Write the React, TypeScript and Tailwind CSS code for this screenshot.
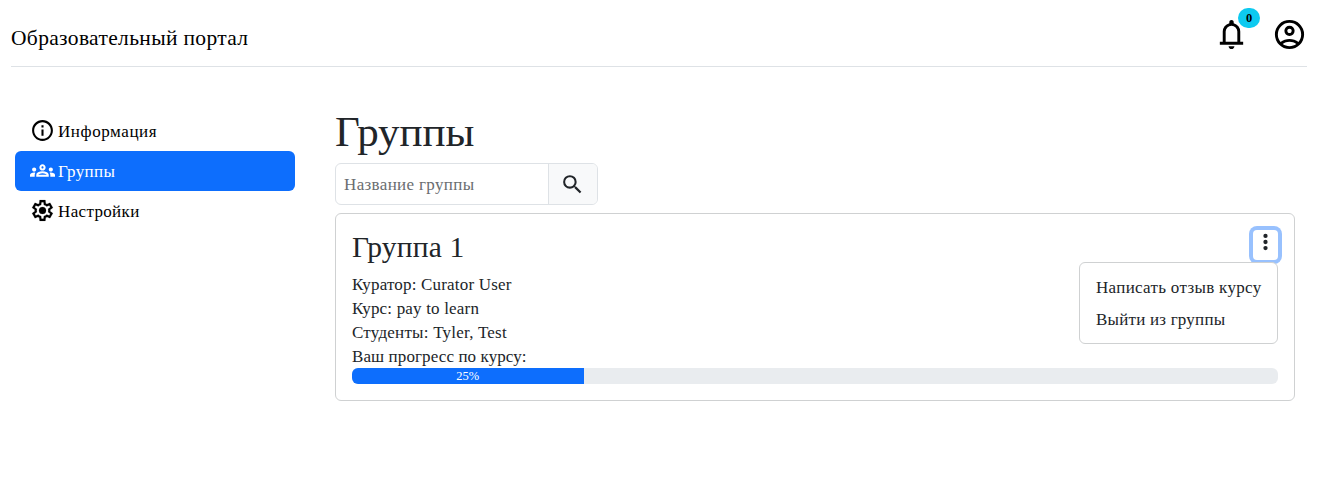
import React from "react";
import { MdInfoOutline, MdOutlineGroups, MdSearch } from "react-icons/md";

const progress = 25;

function BellIcon() {
  return (
    <svg viewBox="0 -960 960 960" fill="currentColor" className="size-[35px]">
      <path d="M160-200v-80h80v-280q0-83 50-147.5T420-792v-28q0-25 17.5-42.5T480-880q25 0 42.5 17.5T540-820v28q80 20 130 84.5T720-560v280h80v80H160Zm320 120q-33 0-56.5-23.5T400-160h160q0 33-23.5 56.5T480-80ZM320-280h320v-280q0-66-47-113t-113-47q-66 0-113 47t-47 113v280Z" />
    </svg>
  );
}

function AccountIcon() {
  return (
    <svg viewBox="0 -960 960 960" fill="currentColor" className="size-[35px]">
      <path d="M234-276q51-39 114-61.5T480-360q69 0 132 22.5T726-276q35-41 54.5-93T800-480q0-133-93.5-226.5T480-800q-133 0-226.5 93.5T160-480q0 59 19.5 111t54.5 93Zm246-164q-59 0-99.5-40.5T340-580q0-59 40.5-99.5T480-720q59 0 99.5 40.5T620-580q0 59-40.5 99.5T480-440Zm0 360q-83 0-156-31.5T197-197q-54-54-85.5-127T80-480q0-83 31.5-156T197-763q54-54 127-85.5T480-880q83 0 156 31.5T763-763q54 54 85.5 127T880-480q0 83-31.5 156T763-197q-54 54-127 85.5T480-80Zm0-80q53 0 100-15.5t86-44.5q-39-29-86-44.5T480-280q-53 0-100 15.5T294-220q39 29 86 44.5T480-160Zm0-360q26 0 43-17t17-43q0-26-17-43t-43-17q-26 0-43 17t-17 43q0 26 17 43t43 17Z" />
    </svg>
  );
}

function SettingsIcon() {
  return (
    <svg
      viewBox="0 -960 960 960"
      fill="currentColor"
      stroke="currentColor"
      strokeWidth="6"
      className="size-[25px]"
    >
      <path d="m370-80-16-128q-13-5-24.5-12T307-235l-119 50L78-375l103-78q-1-7-1-13.5v-27q0-6.5 1-13.5L78-585l110-190 119 50q11-8 23-15t24-12l16-128h220l16 128q13 5 24.5 12t22.5 15l119-50 110 190-103 78q1 7 1 13.5v27q0 6.5-2 13.5l103 78-110 190-118-50q-11 8-23 15t-24 12L590-80H370Zm70-80h79l14-106q31-8 57.5-23.5T639-327l99 41 39-68-86-65q5-14 7-29.5t2-31.5q0-16-2-31.5t-7-29.5l86-65-39-68-99 42q-22-23-48.5-38.5T533-694l-13-106h-79l-14 106q-31 8-57.5 23.5T321-633l-99-41-39 68 86 64q-5 15-7 30t-2 32q0 16 2 31t7 30l-86 65 39 68 99-42q22 23 48.5 38.5T427-266l13 106Z" />
      <circle cx="480" cy="-480" r="135" />
    </svg>
  );
}

function MoreIcon() {
  return (
    <svg viewBox="0 0 24 24" fill="currentColor" className="size-6 shrink-0">
      <circle cx="11.5" cy="5.9" r="2.15" />
      <circle cx="11.5" cy="12" r="2.15" />
      <circle cx="11.5" cy="18.1" r="2.15" />
    </svg>
  );
}

function Header() {
  return (
    <header className="mx-[11px] mr-[13px] flex h-[67px] items-start justify-between border-b border-[#dee2e6] text-black">
      <span className="mt-[23px] text-[21.5px] leading-[30px] tracking-[0.34px]">Образовательный портал</span>
      <div className="flex pt-[17px]">
        <button type="button" className="relative mr-[23px] block">
          <BellIcon />
          <span className="absolute -top-[9px] left-[24px] flex h-5 w-[22px] items-center justify-center rounded-full bg-[#0dcaf0] text-[12.5px] leading-none font-bold">
            0
          </span>
        </button>
        <button type="button" className="block">
          <AccountIcon />
        </button>
      </div>
    </header>
  );
}

function Sidebar() {
  return (
    <nav className="ml-[15px] flex w-[280px] flex-col pt-[44px] text-[17px] leading-6 text-black">
      <a className="flex h-10 items-center gap-[3px] px-[15px]">
        <MdInfoOutline className="mb-px size-[25px]" />
        <span className="pt-px tracking-[0.58px]">Информация</span>
      </a>
      <a className="flex h-10 items-center gap-[3px] rounded-md bg-[#0d6efd] px-[15px] text-white">
        <MdOutlineGroups className="mb-px size-[25px]" />
        <span className="pt-px tracking-[0.35px]">Группы</span>
      </a>
      <a className="flex h-10 items-center gap-[3px] px-[15px]">
        <span className="mb-px">
          <SettingsIcon />
        </span>
        <span className="pt-px tracking-[0.35px]">Настройки</span>
      </a>
    </nav>
  );
}

function GroupCard() {
  return (
    <section className="mt-2 h-[188px] rounded-md border border-[#cfd1d2] px-4 pt-4">
      <div className="flex h-[42px] justify-between">
        <h2 className="text-[29.5px] leading-[34px] tracking-[0.15px]">Группа 1</h2>
        <div className="relative">
          <button
            type="button"
            className="flex h-[30px] w-[25px] items-start justify-center rounded-[4px] ring-4 ring-[#98c1fe]"
          >
            <MoreIcon />
          </button>
          <div className="absolute top-[32px] right-0 flex h-[82px] w-[199px] flex-col rounded-md border border-[#cfd1d2] bg-white px-4 pt-[9px] text-[17px] leading-6 whitespace-nowrap">
            <a className="py-1 tracking-[0.31px]">Написать отзыв курсу</a>
            <a className="py-1 tracking-[0.22px]">Выйти из группы</a>
          </div>
        </div>
      </div>
      <div className="pt-px text-[17px] leading-6">
        <p className="tracking-[0.19px]">Куратор: Curator User</p>
        <p className="tracking-[0.18px]">Курс: pay to learn</p>
        <p className="tracking-[0.23px]">Студенты: Tyler, Test</p>
        <p className="-mb-px tracking-[0.1px]">Ваш прогресс по курсу:</p>
      </div>
      <div className="flex h-4 overflow-hidden rounded-md bg-[#e9ecef]">
        <div
          className="flex items-center justify-center bg-[#0d6efd] text-[12.5px] leading-4 text-white"
          style={{ width: `${progress}%` }}
        >
          {progress}%
        </div>
      </div>
    </section>
  );
}

export default function App() {
  return (
    <div className="h-[496px] w-full bg-white font-['Liberation_Serif',serif] text-[#212529]">
      <Header />
      <div className="flex">
        <Sidebar />
        <main className="ml-10 w-[960px] pt-[41px]">
          <h1 className="mb-[7px] text-[43px] leading-[48px]">Группы</h1>
          <div className="flex h-[42px] w-[263px] overflow-hidden rounded-md border border-[#dee2e6]">
            <input
              type="text"
              placeholder="Название группы"
              className="w-[212px] px-2 pt-px text-[17px] leading-6 tracking-[0.35px] outline-none placeholder:text-[#6a6d70]"
            />
            <button
              type="button"
              className="flex flex-1 items-center justify-center border-l border-[#dee2e6] bg-[#f8f9fa] pr-px"
            >
              <MdSearch className="size-[25px]" />
            </button>
          </div>
          <GroupCard />
        </main>
      </div>
    </div>
  );
}
